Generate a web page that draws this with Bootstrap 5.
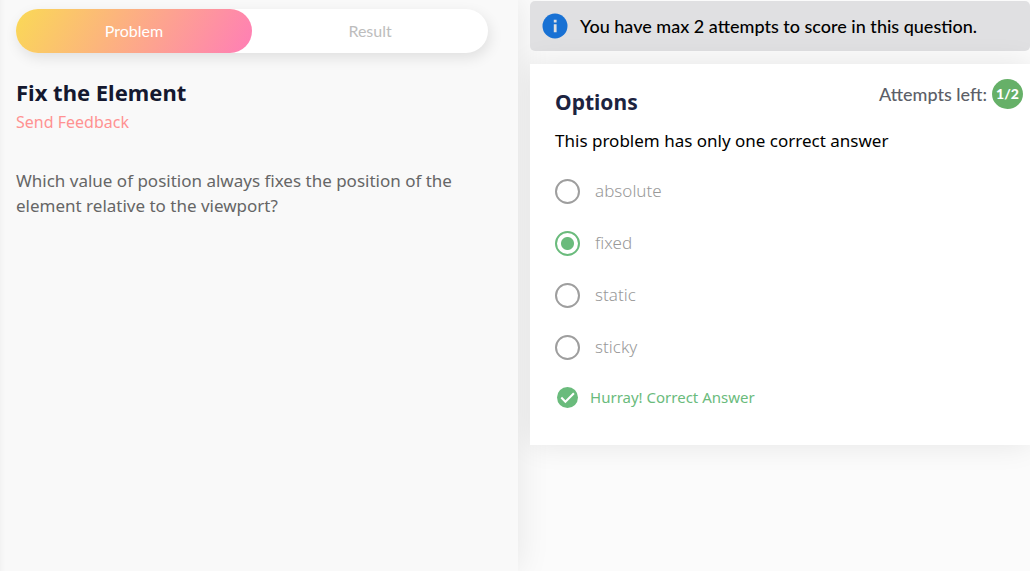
<!DOCTYPE html>
<html lang="en">
<head>
<meta charset="utf-8">
<meta name="viewport" content="width=device-width, initial-scale=1">
<title>Fix the Element</title>
<link href="https://cdn.jsdelivr.net/npm/bootstrap@5.3.0/dist/css/bootstrap.min.css" rel="stylesheet">
<style>
  body { font-family: "Noto Sans", "Open Sans", sans-serif; background: #fbfbfb; color: #000; }
  .lato { font-family: Lato, sans-serif; }
  .problem-pane { flex: 0 0 50.3%; background: #f9f9f9; padding: 9px 30px 16px 16px; box-shadow: 0 0 32px rgba(0,0,0,.09), inset 5px 0 4px -3px rgba(0,0,0,.03); z-index: 0; }
  .answer-pane { min-width: 0; padding: 1px 0 16px 12px; }
  .tabs { background: #fff; box-shadow: 2px 5px 14px rgba(0,0,0,.1); }
  .tabs .nav-link { height: 44px; padding: 0; border-radius: 22px; font-size: 16px; color: #bdbdbd; }
  .tabs .nav-link.active { color: #fff; background: linear-gradient(120deg, #fad956, #ff7eb6); }
  .title { font-size: 22px; line-height: 30px; font-weight: 700; color: #14182f; }
  .feedback { display: inline-block; margin-top: 3px; font-size: 16px; line-height: 24px; font-weight: 400; color: #ff9292; }
  .question { font-size: 17px; line-height: 25px; color: #666; margin-top: 34px; }
  .notice { height: 50px; padding: 0 12px; background: #e0e0e2; border-radius: 5px; font-size: 18px; font-weight: 500; }
  .panel { margin-top: 13px; padding: 15px 7px 34px 25px; background: #fff; box-shadow: 0 0 28px rgba(0,0,0,.09); }
  .options-title { font-size: 21px; line-height: 30px; font-weight: 700; color: #1c2340; margin-top: 8px; }
  .attempts { font-size: 18px; line-height: 30px; font-weight: 500; color: #5c5f68; gap: 5px; }
  .count { width: 31px; height: 30px; border-radius: 50%; background: #66b068; color: #fff; font-size: 14px; font-weight: 900; }
  .hint { font-size: 17px; line-height: 24px; margin: 12px 0 25px; }
  .choice { height: 26px; gap: 15px; font-size: 17px; font-weight: 300; color: #999; }
  .choices { gap: 26px; }
  .choice .form-check-input { width: 25px; height: 25px; border: 2px solid #9e9e9e; margin: 0; box-shadow: none; }
  .choice .form-check-input:checked { border-color: #6abb7c; background: radial-gradient(circle, #6abb7c 6px, #fff 7px); }
  .success { margin-top: 23px; padding-left: 2px; gap: 12px; font-size: 15px; line-height: 28px; color: #6abb7c; }
</style>
</head>
<body>
<div class="d-flex min-vh-100">
  <section class="problem-pane position-relative">
    <div class="tabs nav nav-pills nav-fill rounded-pill lato" role="tablist">
      <div class="nav-item w-50"><button class="nav-link active w-100" type="button" role="tab" aria-selected="true">Problem</button></div>
      <div class="nav-item w-50"><button class="nav-link w-100" type="button" role="tab" aria-selected="false">Result</button></div>
    </div>
    <h1 class="title mb-0 mt-4">Fix the Element</h1>
    <a class="feedback text-decoration-none" href="#">Send Feedback</a>
    <p class="question mb-0">Which value of position always fixes the position of the element relative to the viewport?</p>
  </section>
  <main class="answer-pane flex-grow-1 position-relative overflow-hidden">
    <div class="notice d-flex align-items-center gap-2 lato" role="status">
      <svg class="me-1" width="26" height="26" viewBox="0 0 26 26" aria-hidden="true"><circle cx="13" cy="13" r="12.5" fill="#1871d4"/><path d="M11.8 6.8h2.8v2.7h-2.8zM11.8 11.3h2.8v8h-2.8z" fill="#e0e0e2"/></svg>
      <span>You have max 2 attempts to score in this question.</span>
    </div>
    <section class="panel">
      <div class="d-flex justify-content-between align-items-start">
        <h2 class="options-title mb-0">Options</h2>
        <div class="attempts d-flex align-items-center lato"><span>Attempts left:</span><span class="count d-flex align-items-center justify-content-center">1/2</span></div>
      </div>
      <p class="hint">This problem has only one correct answer</p>
      <div class="choices d-flex flex-column">
        <div class="choice d-flex align-items-center"><input class="form-check-input" type="radio" name="position" id="absolute"><label for="absolute">absolute</label></div>
        <div class="choice d-flex align-items-center"><input class="form-check-input" type="radio" name="position" id="fixed" checked><label for="fixed">fixed</label></div>
        <div class="choice d-flex align-items-center"><input class="form-check-input" type="radio" name="position" id="static"><label for="static">static</label></div>
        <div class="choice d-flex align-items-center"><input class="form-check-input" type="radio" name="position" id="sticky"><label for="sticky">sticky</label></div>
      </div>
      <div class="success d-flex align-items-center">
        <svg width="21" height="21" viewBox="0 0 21 21" aria-hidden="true"><circle cx="10.5" cy="10.5" r="10.5" fill="#6abb7c"/><path d="M4.3 10.6l4.1 4.1 8.5-8.5" fill="none" stroke="#fff" stroke-width="2.1"/></svg>
        <span>Hurray! Correct Answer</span>
      </div>
    </section>
  </main>
</div>
<script src="https://cdn.jsdelivr.net/npm/bootstrap@5.3.0/dist/js/bootstrap.bundle.min.js"></script>
</body>
</html>
